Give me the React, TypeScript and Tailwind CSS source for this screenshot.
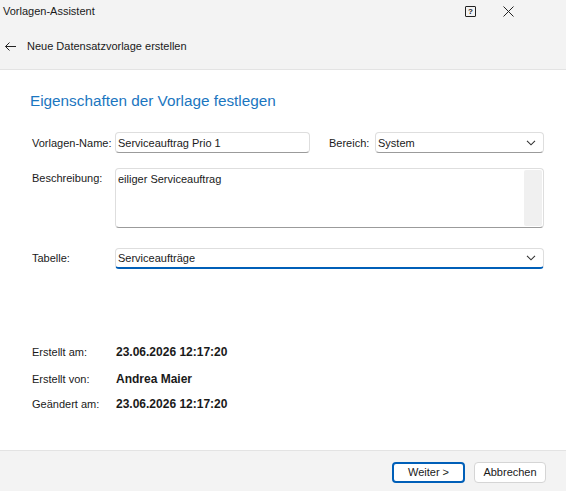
import React from "react";

const font = { fontFamily: '"Liberation Sans", Arial, sans-serif' };

function Chevron() {
  return (
    <svg width="10" height="6" viewBox="0 0 10 6" className="shrink-0">
      <polyline points="1,0.8 5,4.8 9,0.8" fill="none" stroke="#333" strokeWidth="1.1" />
    </svg>
  );
}

export default function App() {
  return (
    <div className="w-[566px] h-[491px] flex flex-col bg-white text-[#1a1a1a] overflow-hidden" style={font}>
      {/* Top area */}
      <div className="bg-[#f3f3f3] border-b border-[#e3e3e3]">
        <div className="h-[23px] flex items-center pl-[3px]">
          <span className="text-[11px] text-[#1a1a1a]">Vorlagen-Assistent</span>
          <div className="ml-auto flex items-center">
            <div className="w-[11px] h-[11px] border border-[#222] rounded-[1px] flex items-center justify-center text-[8px] font-bold leading-none mr-[27px]">?</div>
            <svg width="11" height="11" viewBox="0 0 11 11" className="mr-[52px]">
              <line x1="0.5" y1="0.5" x2="10.5" y2="10.5" stroke="#222" strokeWidth="1" />
              <line x1="10.5" y1="0.5" x2="0.5" y2="10.5" stroke="#222" strokeWidth="1" />
            </svg>
          </div>
        </div>
        <div className="h-[46px] flex items-center pl-[5px] pt-[1px]">
          <svg width="11" height="9" viewBox="0 0 11 9" className="mr-[11px]">
            <line x1="0.5" y1="4.5" x2="11" y2="4.5" stroke="#222" strokeWidth="1" />
            <polyline points="4.5,0.5 0.5,4.5 4.5,8.5" fill="none" stroke="#222" strokeWidth="1" />
          </svg>
          <span className="text-[11px]">Neue Datensatzvorlage erstellen</span>
        </div>
      </div>

      {/* Content */}
      <div className="flex-1 bg-white pl-[30px] pr-[22px]">
        <div className="mt-[21px] text-[15.3px] leading-[20px] text-[#1b76c0]">Eigenschaften der Vorlage festlegen</div>

        <div className="mt-[21px] flex items-center h-[21px] text-[11px]">
          <span className="w-[85px] pl-[2px] shrink-0 pt-[1px]">Vorlagen-Name:</span>
          <div className="w-[195px] h-[21px] border border-[#dedede] border-b-[#9b9b9b] rounded-[4px] flex items-center pl-[2px] pt-[1px] bg-white">
            Serviceauftrag Prio 1
          </div>
          <span className="ml-[19px] w-[46px] shrink-0 pt-[1px]">Bereich:</span>
          <div className="flex-1 h-[21px] border border-[#dedede] border-b-[#9b9b9b] rounded-[4px] flex items-center pl-[2px] pr-[7px] pt-[1px] bg-white">
            <span className="flex-1">System</span>
            <Chevron />
          </div>
        </div>

        <div className="mt-[15px] flex items-start text-[11px]">
          <span className="w-[85px] pl-[2px] shrink-0 pt-[2px]">Beschreibung:</span>
          <div className="flex-1 h-[60px] border border-[#dedede] border-b-[#9b9b9b] rounded-[4px] flex bg-white p-[1px]">
            <span className="flex-1 pl-[1px] pt-[1px]">eiliger Serviceauftrag</span>
            <div className="w-[18px] h-full bg-[#f0f0f0] rounded-[2px]" />
          </div>
        </div>

        <div className="mt-[20px] flex items-center text-[11px]">
          <span className="w-[85px] pl-[2px] shrink-0">Tabelle:</span>
          <div className="flex-1 h-[21px] border border-[#dedede] border-b-2 border-b-[#005fb8] rounded-[4px] flex items-center pl-[2px] pr-[7px] bg-white">
            <span className="flex-1">Serviceaufträge</span>
            <Chevron />
          </div>
        </div>

        <div className="mt-[74px] flex items-center h-[18px] text-[11px]">
          <span className="w-[86px] pl-[2px] shrink-0">Erstellt am:</span>
          <span className="font-bold text-[12px]">23.06.2026 12:17:20</span>
        </div>
        <div className="mt-[9px] flex items-center h-[18px] text-[11px]">
          <span className="w-[86px] pl-[2px] shrink-0">Erstellt von:</span>
          <span className="font-bold text-[12px]">Andrea Maier</span>
        </div>
        <div className="mt-[7px] flex items-center h-[18px] text-[11px]">
          <span className="w-[86px] pl-[2px] shrink-0">Geändert am:</span>
          <span className="font-bold text-[12px]">23.06.2026 12:17:20</span>
        </div>
      </div>

      {/* Footer */}
      <div className="h-[41px] bg-[#f3f3f3] border-t border-[#e3e3e3] flex items-start justify-end pt-[11px] pr-[20px] gap-[9px] text-[11px]">
        <button className="w-[73px] h-[21px] bg-white border-2 border-[#005fb8] rounded-[4px] flex items-center justify-center">
          Weiter &gt;
        </button>
        <button className="w-[72px] h-[21px] bg-white border border-[#d5d5d5] rounded-[4px] flex items-center justify-center">
          Abbrechen
        </button>
      </div>
    </div>
  );
}
